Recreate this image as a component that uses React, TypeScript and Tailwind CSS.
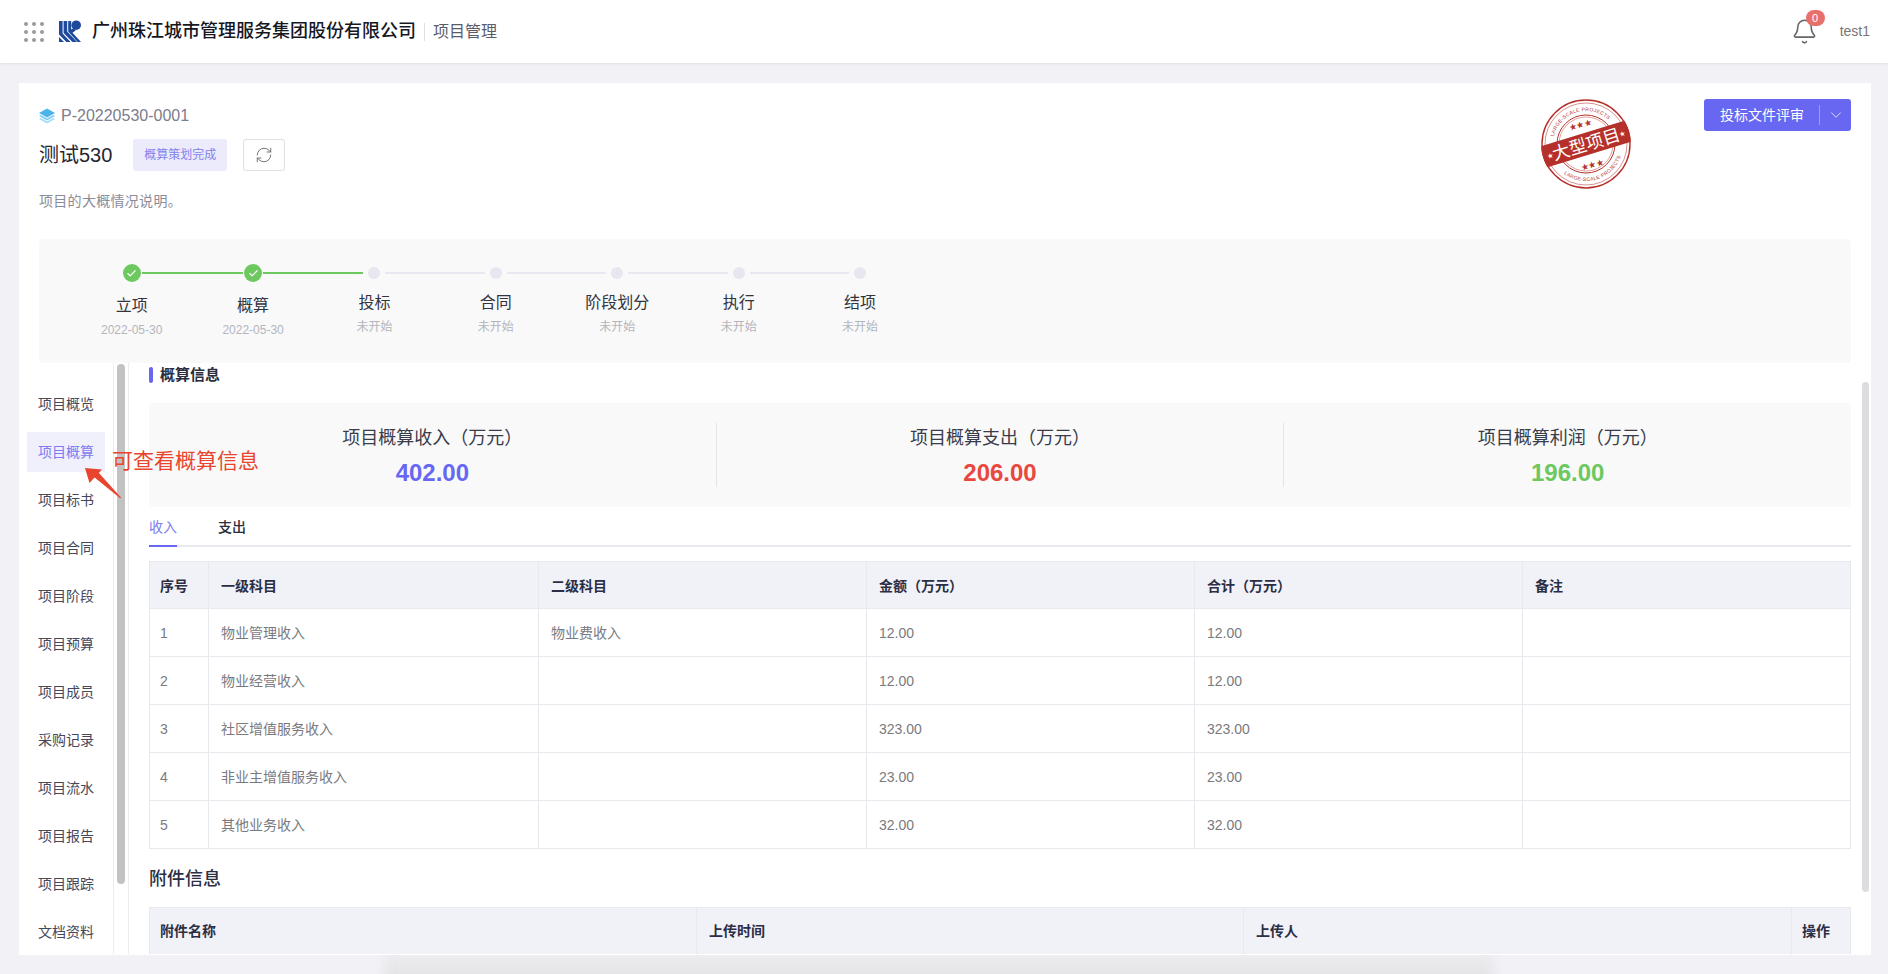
import { Check, ChevronDown, RefreshCw, Bell } from "lucide-react"

const navItems = [
  "项目概览",
  "项目概算",
  "项目标书",
  "项目合同",
  "项目阶段",
  "项目预算",
  "项目成员",
  "采购记录",
  "项目流水",
  "项目报告",
  "项目跟踪",
  "文档资料",
]

const steps = [
  { name: "立项", sub: "2022-05-30", done: true },
  { name: "概算", sub: "2022-05-30", done: true },
  { name: "投标", sub: "未开始", done: false },
  { name: "合同", sub: "未开始", done: false },
  { name: "阶段划分", sub: "未开始", done: false },
  { name: "执行", sub: "未开始", done: false },
  { name: "结项", sub: "未开始", done: false },
]

const rows = [
  ["1", "物业管理收入", "物业费收入", "12.00", "12.00", ""],
  ["2", "物业经营收入", "", "12.00", "12.00", ""],
  ["3", "社区增值服务收入", "", "323.00", "323.00", ""],
  ["4", "非业主增值服务收入", "", "23.00", "23.00", ""],
  ["5", "其他业务收入", "", "32.00", "32.00", ""],
]

function Logo() {
  return (
    <svg width="22" height="23" viewBox="0 0 22 23">
      <path d="M0 1h3.6v12.5l8 8.5H7.4L0 14.5z" fill="#1f4a9c" />
      <path d="M0 17l5 5H0z" fill="#1f4a9c" />
      <path d="M4.6 1h3.6v10.5L18 22h-4.6l-8.8-9z" fill="#1f4a9c" />
      <path d="M9.2 1h3v8.5l2.5-1.5 2 2.5-3.2 2.2L22 22h-3.4L9.2 11.5z" fill="#1f4a9c" />
      <circle cx="17.2" cy="5.2" r="4.8" fill="#1f4a9c" />
    </svg>
  )
}

function Stamp() {
  return (
    <svg width="92" height="92" viewBox="0 0 92 92">
      <defs>
        <clipPath id="stamp-clip">
          <circle cx="46" cy="46" r="45" />
        </clipPath>
        <path id="stamp-top" d="M13 46a33 33 0 0 1 66 0" />
        <path id="stamp-bottom" d="M9 46a37 37 0 0 0 74 0" />
      </defs>
      <circle cx="46" cy="46" r="44" fill="none" stroke="#b5302a" strokeWidth="1.4" />
      <circle cx="46" cy="46" r="41" fill="none" stroke="#c9635d" strokeWidth="0.7" />
      <circle cx="46" cy="46" r="29" fill="none" stroke="#b5302a" strokeWidth="1" />
      <circle cx="46" cy="46" r="27" fill="none" stroke="#c9635d" strokeWidth="0.6" />
      <g transform="rotate(-17 46 46)" fontFamily="'Liberation Sans', sans-serif">
        <text fontSize="5" fill="#b5302a" letterSpacing="0.3">
          <textPath href="#stamp-top" startOffset="50%" textAnchor="middle">LARGE-SCALE PROJECTS</textPath>
        </text>
        <text fontSize="5" fill="#b5302a" letterSpacing="0.3">
          <textPath href="#stamp-bottom" startOffset="50%" textAnchor="middle">LARGE-SCALE PROJECTS</textPath>
        </text>
        <text x="46" y="29" textAnchor="middle" fontSize="9" fill="#b5302a">★★★</text>
        <text x="46" y="71" textAnchor="middle" fontSize="9" fill="#b5302a">★★★</text>
        <g clipPath="url(#stamp-clip)">
          <rect x="0" y="35" width="92" height="22" fill="#b5302a" />
        </g>
        <text x="46" y="52.5" textAnchor="middle" fontSize="17.5" fill="#fff" fontFamily="'Noto Sans CJK SC', serif">大型项目</text>
        <text x="5" y="49.5" fontSize="7" fill="#fff">★</text>
        <text x="81" y="49.5" fontSize="7" fill="#fff">★</text>
      </g>
    </svg>
  )
}

function Stepper() {
  return (
    <div className="flex h-[124px] items-start rounded-sm bg-[#f9f9fa] pl-[32px]">
      <div className="mt-[25px] flex items-center">
        {steps.map((step, i) => {
          const prevDone = i > 0 && steps[i - 1].done
          return (
            <div key={step.name} className="flex w-[121.4px] flex-col items-center">
              <div className="flex w-full items-center">
                <div className={`mr-[1px] h-[2px] flex-1 ${i === 0 ? "" : prevDone ? "bg-[#6cc85f]" : "bg-[#e8e9f0]"}`} />
                {step.done ? (
                  <div className="flex h-[18px] w-[18px] items-center justify-center rounded-full bg-[#6cc85f]">
                    <Check className="h-[11px] w-[11px] text-white" strokeWidth={2.5} />
                  </div>
                ) : (
                  <div className="mx-[4px] h-[12px] w-[12px] rounded-full bg-[#e6e7ef]" />
                )}
                <div className={`ml-[1px] h-[2px] flex-1 ${i === steps.length - 1 ? "" : step.done ? "bg-[#6cc85f]" : "bg-[#e8e9f0]"}`} />
              </div>
              <div className="mt-[12px] text-[16px] leading-[24px] text-[#33343d]">{step.name}</div>
              <div className="mt-[3px] text-[12px] leading-[18px] text-[#b4b5bb]">{step.sub}</div>
            </div>
          )
        })}
      </div>
    </div>
  )
}

function Stat({ title, value, color, border }: { title: string; value: string; color: string; border?: boolean }) {
  return (
    <div className={`flex h-[64px] flex-1 flex-col items-center justify-between ${border ? "border-r border-[#e4e5ea]" : ""}`}>
      <div className="text-[18px] leading-[30px] text-[#3a3c4a]">{title}</div>
      <div className={`text-[24px] leading-[28px] font-bold ${color}`}>{value}</div>
    </div>
  )
}

export default function App() {
  return (
    <div className="relative flex h-screen flex-col overflow-hidden bg-[#f1f1f6] font-['Liberation_Sans','Noto_Sans_CJK_SC',sans-serif]">
      {/* Window shadow bleeding into the bottom strip */}
      <div className="pointer-events-none absolute -bottom-[10px] left-[385px] h-[34px] w-[1108px] bg-gradient-to-b from-[#eeedf1] to-[#e1e1e3] blur-[5px]" />

      {/* Top bar */}
      <header className="z-10 flex h-[63px] shrink-0 items-center justify-between bg-white pl-[24px] pr-[18px] shadow-[0_1px_3px_rgba(0,0,0,0.08)]">
        <div className="flex items-center">
          <div className="grid w-[20px] grid-cols-3 gap-[4px]">
            {Array.from({ length: 9 }).map((_, i) => (
              <span key={i} className="h-[4px] w-[4px] rounded-full bg-[#9a9a9f]" />
            ))}
          </div>
          <div className="ml-[15px]">
            <Logo />
          </div>
          <div className="ml-[11px] text-[18px] font-medium text-[#16171f]">广州珠江城市管理服务集团股份有限公司</div>
          <div className="ml-[8px] h-[18px] w-px bg-[#dfe0e6]" />
          <div className="ml-[8px] text-[16px] text-[#5a5c6b]">项目管理</div>
        </div>
        <div className="flex items-center">
          <div className="relative">
            <Bell className="h-[27px] w-[27px] text-[#666]" strokeWidth={1.4} />
            <span className="absolute left-[15px] top-[-8px] flex h-[16px] w-[19px] items-center justify-center rounded-full bg-[#e8706a] text-[11px] text-white">0</span>
          </div>
          <span className="ml-[22px] text-[14px] text-[#777]">test1</span>
        </div>
      </header>

      {/* Card */}
      <main className="relative z-[1] mb-[19px] ml-[19px] mr-[17px] mt-[20px] flex min-h-0 flex-1 flex-col overflow-hidden border-b border-white bg-white">
        <div className="relative shrink-0 px-[20px] pt-[22px]">
          <div className="flex h-[22px] items-center text-[16px] text-[#7b7d8b]">
            <svg width="16" height="16" viewBox="0 0 16 16" className="mr-[6px]">
              <path d="M8 0.5l8 4.5-8 4.5L0 5z" fill="#4db4ea" />
              <path d="M1.8 7L8 10.6 14.2 7 16 8l-8 4.5L0 8z" fill="#7ccdf2" />
              <path d="M1.8 10L8 13.6 14.2 10l1.8 1-8 4.5L0 11z" fill="#a4def7" />
            </svg>
            P-20220530-0001
          </div>
          <div className="mt-[12px] flex h-[32px] items-center">
            <div className="text-[20px] text-[#24252f]">测试530</div>
            <div className="ml-[21px] flex h-[32px] w-[94px] items-center justify-center rounded-[3px] bg-[#ebebfc] text-[12px] text-[#8482ee]">概算策划完成</div>
            <button className="ml-[16px] flex h-[32px] w-[42px] items-center justify-center rounded-[3px] border border-[#dfe0e5] bg-white">
              <RefreshCw className="h-[18px] w-[18px] text-[#666]" strokeWidth={1.2} />
            </button>
          </div>
          <div className="mt-[18px] text-[14px] leading-[24px] tracking-[0.3px] text-[#8a8c98]">项目的大概情况说明。</div>

          {/* Stamp and action sit over the header area */}
          <div className="absolute left-[1521px] top-[15px]">
            <Stamp />
          </div>
          <div className="absolute right-[20px] top-[16px] flex h-[32px] w-[147px] items-center rounded-[3px] bg-[#6767f2] text-[14px] text-white">
            <span className="w-[115px] pl-[16px]">投标文件评审</span>
            <span className="h-[20px] w-px bg-[#9c9cf6]" />
            <ChevronDown className="ml-[7px] h-[18px] w-[18px] text-[#e6e6fd]" strokeWidth={1.2} />
          </div>

          <div className="mt-[26px]">
            <Stepper />
          </div>
        </div>

        <div className="flex min-h-0 flex-1">
          {/* Side nav */}
          <nav className="w-[95px] shrink-0 border-r border-[#ececf0] pl-[8px] pr-[8px] pt-[21px]">
            <div className="flex flex-col gap-[8px]">
              {navItems.map((item) => (
                <div
                  key={item}
                  className={`flex h-[40px] w-[78px] shrink-0 items-center justify-center text-[14px] ${item === "项目概算" ? "bg-[#f0f0fd] text-[#7c7bf0]" : "text-[#45475a]"}`}
                >
                  {item}
                </div>
              ))}
            </div>
          </nav>
          <div className="w-[15px] shrink-0 border-r border-[#ececf0] pl-[3px] pt-[1px]">
            <div className="h-[520px] w-[8px] rounded-full bg-[#c2c2c2]" />
          </div>

          {/* Content */}
          <div className="min-w-0 flex-1 pl-[20px]">
            <div className="flex h-[24px] items-center">
              <span className="h-[16px] w-[4px] rounded-full bg-[#6767f2]" />
              <span className="ml-[7px] text-[15px] font-semibold text-[#2b2d3c]">概算信息</span>
            </div>
            <div className="mt-[16px] flex h-[104px] items-center bg-[#f9f9fa]">
              <Stat title="项目概算收入（万元）" value="402.00" color="text-[#6767f2]" border />
              <Stat title="项目概算支出（万元）" value="206.00" color="text-[#e8483f]" border />
              <Stat title="项目概算利润（万元）" value="196.00" color="text-[#6cc85f]" />
            </div>
            <div className="mt-[8px] flex h-[32px] gap-[41px] border-b-2 border-[#e8e9ee] text-[14px]">
              <div className="-mb-[2px] h-[32px] w-[28px] border-b-2 border-[#6767f2] leading-[24px] text-[#7c7bf0]">收入</div>
              <div className="font-medium leading-[24px] text-[#2b2d3c]">支出</div>
            </div>
            <table className="mt-[14px] w-full table-fixed border-collapse text-[14px]">
              <colgroup>
                <col className="w-[59px]" />
                <col className="w-[330px]" />
                <col className="w-[328px]" />
                <col className="w-[328px]" />
                <col className="w-[328px]" />
                <col />
              </colgroup>
              <thead>
                <tr className="h-[47px] bg-[#f1f2f7] text-left text-[#2b2e45]">
                  {["序号", "一级科目", "二级科目", "金额（万元）", "合计（万元）", "备注"].map((h, i) => (
                    <th key={h} className={`border border-[#e8e9ee] pt-[2px] font-semibold ${i === 0 ? "pl-[10px]" : "pl-[12px]"}`}>{h}</th>
                  ))}
                </tr>
              </thead>
              <tbody>
                {rows.map((row) => (
                  <tr key={row[0]} className="h-[48px] text-[#7a7a7e]">
                    {row.map((cell, i) => (
                      <td key={i} className={`border border-[#e8e9ee] pt-[1px] ${i === 0 ? "pl-[10px]" : "pl-[12px]"}`}>{cell}</td>
                    ))}
                  </tr>
                ))}
              </tbody>
            </table>
            <div className="mt-[16px] flex h-[28px] items-center text-[18px] font-medium text-[#2b2e45]">附件信息</div>
            <table className="mt-[14px] w-full table-fixed border-collapse text-[14px]">
              <colgroup>
                <col className="w-[547px]" />
                <col className="w-[547px]" />
                <col className="w-[548px]" />
                <col />
              </colgroup>
              <thead>
                <tr className="h-[48px] bg-[#f1f2f7] text-left text-[#2b2e45]">
                  {["附件名称", "上传时间", "上传人", "操作"].map((h, i) => (
                    <th key={h} className={`border border-[#e8e9ee] font-semibold ${i === 0 || i === 3 ? "pl-[10px]" : "pl-[12px]"}`}>{h}</th>
                  ))}
                </tr>
              </thead>
            </table>
          </div>
          <div className="w-[20px] shrink-0 pl-[11px] pt-[19px]">
            <div className="h-[510px] w-[7px] rounded-full bg-[#dcdde0]" />
          </div>
        </div>

        {/* Annotation over the page */}
        <div className="absolute left-[93px] top-[364px] text-[21px] leading-[27px] text-[#e8452f]">可查看概算信息</div>
        <svg width="44" height="38" viewBox="0 0 44 38" className="absolute left-[64px] top-[382px]">
          <path d="M37.5 33.5L11 12l4-5L38 32.5z" fill="#e8452f" />
          <path d="M2 3l17 1.5L6.5 18z" fill="#e8452f" />
        </svg>
      </main>
    </div>
  )
}
